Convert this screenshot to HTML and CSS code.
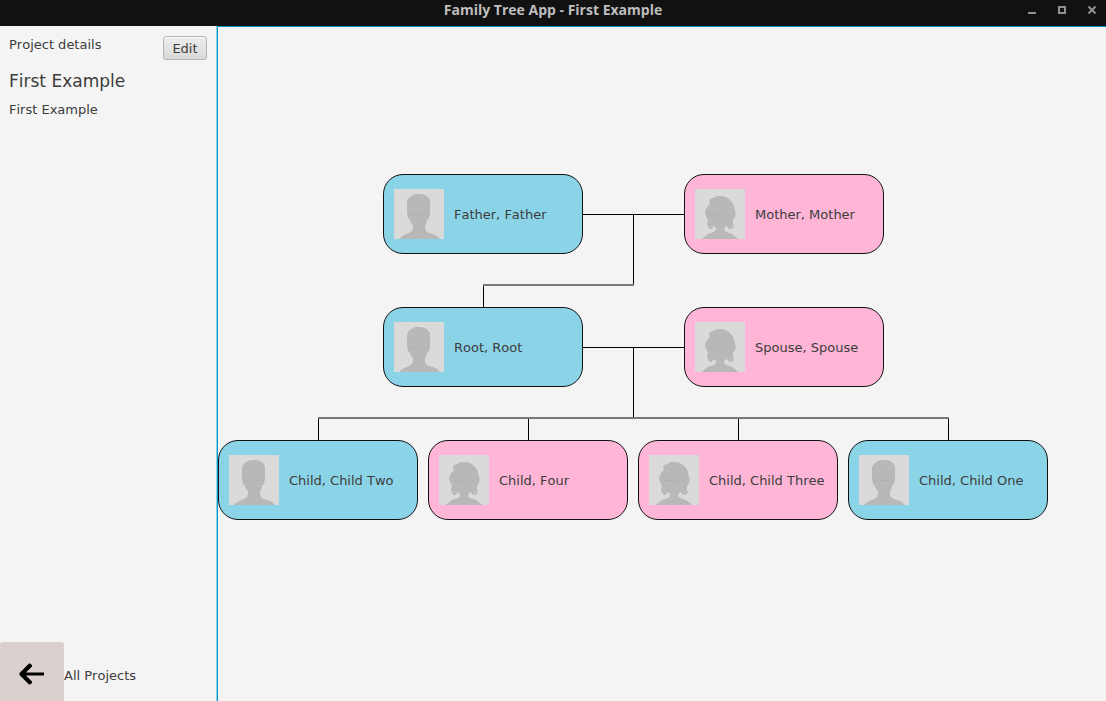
FILE: index.html
```html
<!DOCTYPE html>
<html lang="en">
<head>
<meta charset="utf-8">
<title>Family Tree App - First Example</title>
<link rel="stylesheet" href="styles.css">
</head>
<body>
<svg class="defs" aria-hidden="true">
  <symbol id="male" viewBox="0 0 50 50">
    <path fill="#dadada" d="M0 0H50V50H0Z"/>
    <path fill="#b8b8b8" d="M5 50L7 48L10 46L15 44L18 42L19 39V36L17 34L16 31L14 29L13 24V13L14 10L16 8L19 6L22 5H27L31 6L34 8L36 11V24L35 29L33 31L32 35L31 37V40L33 43L35 44L39 45L43 47L46 50Z"/>
    <path fill="none" stroke="#adadad" stroke-dasharray="2 1 1 2" d="M15 25.500H35"/>
  </symbol>
  <symbol id="female" viewBox="0 0 50 50">
    <path fill="#dadada" d="M0 0H50V50H0Z"/>
    <path fill="#b8b8b8" d="M7 50L9 48L13 45L19 43L21 41V39L18 37L17 40H15L13 38L12 35L13 31L11 27L10 24L11 20L13 17L15 15L14 13L15 10L18 9L22 7H27L31 8L34 10L37 13L39 17L40 22L41 24L40 28L38 31V35L39 37L37 40L34 40L32 37L30 38L29 41L31 43L37 45L41 48L43 50Z"/>
    <path fill="none" stroke="#adadad" stroke-dasharray="2 1 1 2" d="M15 25.500H35"/>
    <path fill="none" stroke="#c8c8c8" stroke-dasharray="1 1" d="M14 36L18 40M34 40L38 36M35 37L40 39"/>
  </symbol>
</svg>
<div class="app">
  <header class="titlebar">
    <h1 class="title">Family Tree App - First Example</h1>
    <div class="window-controls">
      <button class="window-button" aria-label="Minimize"><svg width="8" height="8"><path d="M0 7H8" stroke="#929292" stroke-width="2"/></svg></button>
      <button class="window-button" aria-label="Maximize"><svg width="8" height="8"><path d="M1 1H7V7H1Z" fill="none" stroke="#929292" stroke-width="2"/></svg></button>
      <button class="window-button" aria-label="Close"><svg width="8" height="8"><path d="M0.500 0.500L7.500 7.500M7.500 0.500L0.500 7.500" stroke="#929292" stroke-width="2"/></svg></button>
    </div>
  </header>
  <div class="workspace">
    <aside class="sidebar">
      <div class="details">
        <div class="details-head">
          <span>Project details</span>
          <button class="edit">Edit</button>
        </div>
        <h2 class="project-name">First Example</h2>
        <p class="description">First Example</p>
      </div>
      <div class="back-row">
        <button class="back" id="back" aria-label="Back"><svg width="26" height="22" viewBox="0 0 26 22"><path d="M11 0.500L13 2V3.500L7 9.500H25V12.500H7L13 18.500V20L11 21.500H10L0.500 12V10L10 0.500Z"/></svg></button>
        <label for="back">All Projects</label>
      </div>
    </aside>
    <main class="canvas">
      <svg class="edges" width="832" height="500" aria-hidden="true">
        <path class="line" d="M365 187.500H466M415.500 187V258M265.500 258V280M365 320.500H466M415.500 320V391M100.500 391V413M310.500 391V413M520.500 391V413M730.500 391V413"/>
        <path class="branch" d="M265 258H416M100 391H731"/>
      </svg>
      <div class="person male father"><svg class="avatar"><use href="#male"/></svg><span>Father, Father</span></div>
      <div class="person female mother"><svg class="avatar"><use href="#female"/></svg><span>Mother, Mother</span></div>
      <div class="person male root"><svg class="avatar"><use href="#male"/></svg><span>Root, Root</span></div>
      <div class="person female spouse"><svg class="avatar"><use href="#female"/></svg><span>Spouse, Spouse</span></div>
      <div class="person male child-two"><svg class="avatar"><use href="#male"/></svg><span>Child, Child Two</span></div>
      <div class="person female child-four"><svg class="avatar"><use href="#female"/></svg><span>Child, Four</span></div>
      <div class="person female child-three"><svg class="avatar"><use href="#female"/></svg><span>Child, Child Three</span></div>
      <div class="person male child-one"><svg class="avatar"><use href="#male"/></svg><span>Child, Child One</span></div>
    </main>
  </div>
</div>
</body>
</html>
```
FILE: styles.css
```css
* { box-sizing: border-box; }
body {
  margin: 0;
  background: #f4f4f4;
  color: #3c3c3c;
  font: 13px/16px "DejaVu Sans", sans-serif;
  font-kerning: none;
}
h1, h2, p { margin: 0; font-weight: normal; }
button { font: inherit; color: inherit; }
.defs { display: none; }
.app { display: flex; flex-direction: column; height: 100vh; overflow: hidden; }

.titlebar {
  display: grid;
  grid-template-columns: 1fr auto 1fr;
  flex: none;
  height: 26px;
  background: #111;
}
.title {
  grid-column: 2;
  color: #bebebe;
  font: bold 14px/20px "Open Sans", "Noto Sans", sans-serif;
  font-kerning: none;
}
.window-controls { display: flex; justify-content: flex-end; gap: 14px; height: 20px; padding-right: 6px; }
.window-button { display: flex; align-items: center; justify-content: center; width: 16px; padding: 0; border: 0; background: none; }

.workspace { display: flex; flex: 1; min-height: 0; }
.sidebar { display: flex; flex-direction: column; justify-content: space-between; flex: none; width: 217px; }
.details { padding: 10px 10px 10px 9px; }
.details-head { display: flex; justify-content: space-between; align-items: flex-start; }
.details-head span { padding-top: 1px; }
.edit {
  width: 44px;
  height: 24px;
  padding: 1px 0 0;
  border: 1px solid #b5b5b5;
  border-radius: 3px;
  background: linear-gradient(#ededed, #d9d9d9);
  box-shadow: inset 0 1px #fafafa;
}
.project-name { margin-top: 11px; font-size: 17px; line-height: 20px; }
.description { margin-top: 11px; }
.back-row { display: flex; align-items: center; height: 59px; }
.back-row label { padding-top: 8px; }
.back {
  display: flex;
  align-items: center;
  justify-content: center;
  width: 64px;
  height: 59px;
  padding: 5px 0 0;
  border: 0;
  border-radius: 3px 3px 0 0;
  background: #dad0ce;
}

.canvas {
  position: relative;
  flex: 1;
  overflow: hidden;
  border-top: 1px solid #0096c9;
  border-left: 1px solid #0096c9;
  box-shadow: -1px 0 #8cd3e6;
}
.edges { position: absolute; left: 0; top: 0; }
.line { fill: none; stroke: #000; }
.branch { fill: none; stroke: #797979; stroke-width: 2; }
.person {
  position: absolute;
  display: flex;
  align-items: center;
  gap: 10px;
  width: 200px;
  height: 80px;
  padding: 0 10px;
  border: 1px solid #111;
  border-radius: 20px;
  white-space: nowrap;
}
.person span { padding-top: 2px; }
.male { background: #8bd4e8; }
.female { background: #ffb6d6; }
.avatar { flex: none; width: 50px; height: 50px; }
.father { left: 165px; top: 147px; }
.mother { left: 466px; top: 147px; }
.root { left: 165px; top: 280px; }
.spouse { left: 466px; top: 280px; }
.child-two { left: 0; top: 413px; }
.child-four { left: 210px; top: 413px; }
.child-three { left: 420px; top: 413px; }
.child-one { left: 630px; top: 413px; }
```
